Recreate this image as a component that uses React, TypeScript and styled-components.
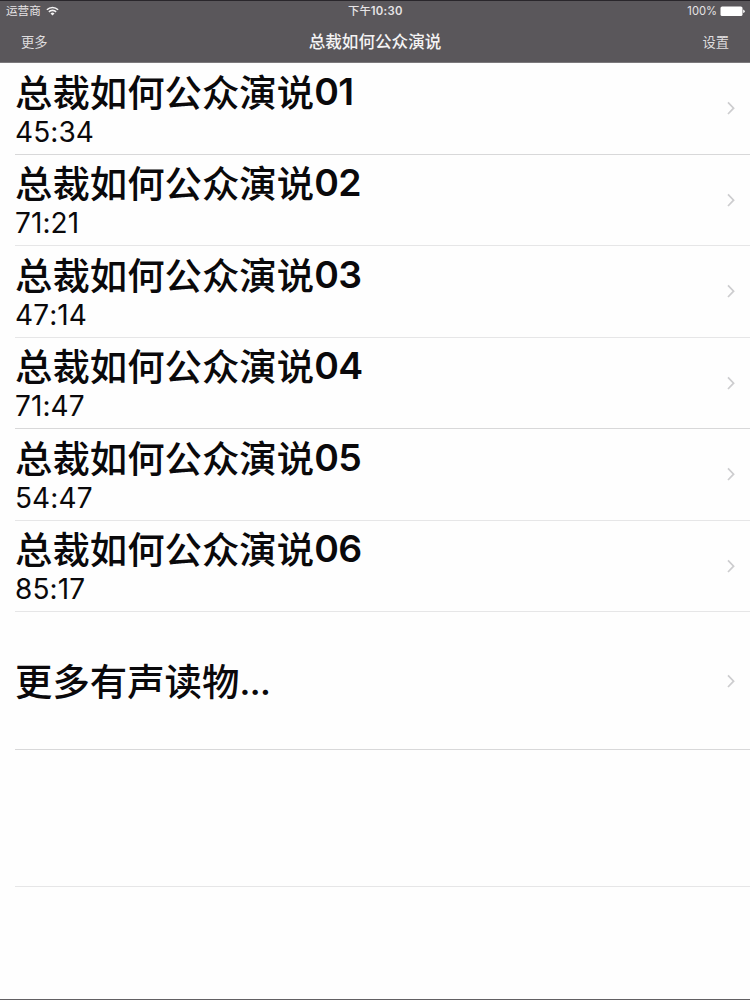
import React from "react";
import styled, { createGlobalStyle } from "styled-components";

const GlobalStyle = createGlobalStyle`
  * { box-sizing: border-box; }
  body {
    margin: 0;
    background: #fefefe;
    color: #0a090b;
    font-family: Inter, "Noto Sans CJK SC", sans-serif;
  }
`;

const Screen = styled.div`
  width: 750px;
  height: 1000px;
  display: flex;
  flex-direction: column;
  overflow: hidden;
  border-top: 1px solid #29262b;
  border-bottom: 1px solid #626063;
`;

const Header = styled.header`
  flex: none;
  height: 62px;
  background: #5a575b;
  border-bottom: 1px solid #7b797c;
  color: #f4f3f4;
`;

const StatusBar = styled.div`
  height: 20px;
  padding: 0 5px 0 6px;
  display: grid;
  grid-template-columns: 1fr auto 1fr;
  align-items: center;
  font-size: 11.6px;
  line-height: 19px;
  color: #e6e4e6;
`;

const StatusGroup = styled.div<{ $end?: boolean }>`
  display: flex;
  align-items: center;
  justify-content: ${(p) => (p.$end ? "flex-end" : "flex-start")};
  gap: ${(p) => (p.$end ? 3 : 5)}px;
`;

const BatteryLevel = styled.span`
  font-size: 11.2px;
`;

const Clock = styled.div`
  font-size: 11.3px;
  font-weight: 600;
  letter-spacing: 0.35px;
`;

const ClockPeriod = styled.span`
  font-weight: 500;
  letter-spacing: 0;
`;

const NavBar = styled.nav`
  height: 41px;
  padding: 0 21px 0 21px;
  display: grid;
  grid-template-columns: 1fr auto 1fr;
  align-items: center;
`;

const NavButton = styled.button<{ $end?: boolean }>`
  justify-self: ${(p) => (p.$end ? "end" : "start")};
  padding: 0;
  border: 0;
  background: none;
  color: #dfdddf;
  font: 400 13.3px/20px Inter, "Noto Sans CJK SC", sans-serif;
`;

const NavTitle = styled.h1`
  margin: 0;
  font-size: 16.6px;
  line-height: 24px;
  font-weight: 500;
`;

const List = styled.ul`
  margin: 0;
  padding: 0 0 0 15px;
  list-style: none;
`;

const Row = styled.li<{ $height: number }>`
  height: ${(p) => p.$height}px;
  padding-right: 14px;
  display: flex;
  align-items: center;
  justify-content: space-between;
  border-bottom: 1px solid #e6e6e7;

  &:nth-child(3n + 1) {
    border-bottom-color: #d8d8d9;
  }
`;

const MoreRow = styled(Row)`
  padding-top: 2px;
`;

const RowTitle = styled.div`
  padding-top: 3px;
  font-size: 37.4px;
  line-height: 46px;
  font-weight: 500;
`;

const TrackNumber = styled.span`
  font-weight: 600;
  letter-spacing: -0.5px;
  vertical-align: 2px;
  line-height: 1;
`;

const Ellipsis = styled.span`
  letter-spacing: -1.2px;
  vertical-align: 1px;
  line-height: 1;
`;

const Duration = styled.div`
  padding-bottom: 2px;
  font-size: 28px;
  line-height: 30px;
  letter-spacing: 0.1px;
  font-kerning: none;
`;

const Wifi = () => (
  <svg width="13" height="10" viewBox="0 0 13 10" fill="none" stroke="#f4f3f4" strokeWidth="1.6">
    <path d="M.9 3.8a8 8 0 0 1 11.2 0M2.9 5.9a5.1 5.1 0 0 1 7.2 0" />
    <path d="M6.5 9.4 4.5 7.5a2.9 2.9 0 0 1 4 0z" fill="#f4f3f4" stroke="none" />
  </svg>
);

const Battery = () => (
  <svg width="25" height="11" viewBox="0 0 25 11" fill="#fff">
    <rect x=".5" y=".5" width="22" height="9.6" rx="1.6" />
    <path d="M23.2 3.5q1.5.4 1.5 1.8t-1.5 1.8z" />
  </svg>
);

const Chevron = () => (
  <svg width="10" height="14" viewBox="0 0 10 14" fill="none" stroke="#cdcdcf" strokeWidth="1.7">
    <path d="m2 1.4 5.6 5.8L2 13" />
  </svg>
);

const tracks = [
  { number: "01", duration: "45:34" },
  { number: "02", duration: "71:21" },
  { number: "03", duration: "47:14" },
  { number: "04", duration: "71:47" },
  { number: "05", duration: "54:47" },
  { number: "06", duration: "85:17" },
];

export default function App() {
  return (
    <Screen>
      <GlobalStyle />
      <Header>
        <StatusBar>
          <StatusGroup>
            <span>运营商</span>
            <Wifi />
          </StatusGroup>
          <Clock>
            <ClockPeriod>下午</ClockPeriod>10:30
          </Clock>
          <StatusGroup $end>
            <BatteryLevel>100%</BatteryLevel>
            <Battery />
          </StatusGroup>
        </StatusBar>
        <NavBar>
          <NavButton>更多</NavButton>
          <NavTitle>总裁如何公众演说</NavTitle>
          <NavButton $end>设置</NavButton>
        </NavBar>
      </Header>
      <List>
        {tracks.map((t) => (
          <Row key={t.number} $height={91.5}>
            <div>
              <RowTitle>
                总裁如何公众演说<TrackNumber>{t.number}</TrackNumber>
              </RowTitle>
              <Duration>{t.duration}</Duration>
            </div>
            <Chevron />
          </Row>
        ))}
        <MoreRow $height={137.5}>
          <RowTitle>
            更多有声读物<Ellipsis>...</Ellipsis>
          </RowTitle>
          <Chevron />
        </MoreRow>
        <Row $height={137} />
      </List>
    </Screen>
  );
}
